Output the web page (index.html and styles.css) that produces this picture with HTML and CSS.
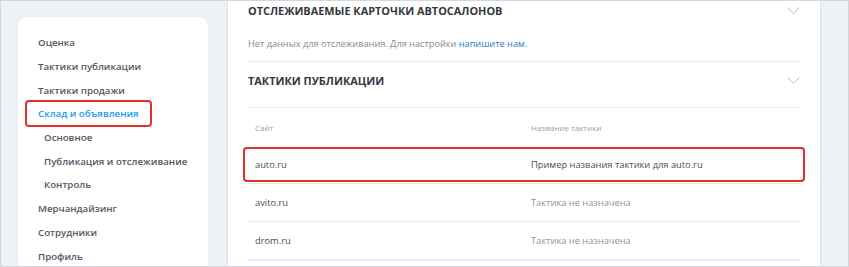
FILE: index.html
```html
<!DOCTYPE html>
<html lang="ru">

<head>
    <meta charset="UTF-8">
    <title>Настройки</title>
    <link rel="stylesheet" href="styles.css">
</head>

<body>
    <div class="frame">
        <aside class="sidebar">
            <div class="nav-item">Оценка</div>
            <div class="nav-item">Тактики публикации</div>
            <div class="nav-item">Тактики продажи</div>
            <div class="nav-item active"><span class="marked">Склад и объявления</span></div>
            <div class="nav-item sub">Основное</div>
            <div class="nav-item sub">Публикация и отслеживание</div>
            <div class="nav-item sub">Контроль</div>
            <div class="nav-item">Мерчандайзинг</div>
            <div class="nav-item">Сотрудники</div>
            <div class="nav-item">Профиль</div>
        </aside>

        <main class="panel">
            <div class="section-head first">
                <span>Отслеживаемые карточки автосалонов</span>
                <svg class="chevron" width="13" height="8" viewBox="0 0 13 8">
                    <polyline points="0.5,0.5 6.5,6.5 12.5,0.5" />
                </svg>
            </div>
            <p class="empty">Нет данных для отслеживания. Для настройки <a href="#">напишите нам.</a></p>

            <div class="section-head">
                <span>Тактики публикации</span>
                <svg class="chevron" width="13" height="8" viewBox="0 0 13 8">
                    <polyline points="0.5,0.5 6.5,6.5 12.5,0.5" />
                </svg>
            </div>

            <div class="tactics">
                <div class="row head">
                    <div>Сайт</div>
                    <div>Название тактики</div>
                </div>
                <div class="row marked-row">
                    <div>auto.ru</div>
                    <div>Пример названия тактики для auto.ru</div>
                </div>
                <div class="row">
                    <div>avito.ru</div>
                    <div class="none">Тактика не назначена</div>
                </div>
                <div class="row last">
                    <div>drom.ru</div>
                    <div class="none">Тактика не назначена</div>
                </div>
            </div>
        </main>
    </div>
</body>

</html>
```

FILE: styles.css
```css
body {
    margin: 0;
    font-family: 'Open Sans', sans-serif;
    background: #eef1f5;
}

.frame {
    height: 267px;
    box-sizing: border-box;
    border: 1px solid #d3d6da;
    overflow: hidden;
    display: flex;
    padding-left: 17px;
    gap: 20px;
}

/* left menu */
.sidebar {
    width: 190px;
    margin-top: 16px;
    padding-top: 14px;
    background: white;
    border-radius: 8px 8px 0 0;
    box-shadow: 0 0 1px rgba(0, 0, 0, 0.12);
}

.nav-item {
    height: 23.7px;
    display: flex;
    align-items: center;
    padding-left: 20px;
    font-size: 9.7px;
    font-weight: 600;
    color: #53585e;
}

.nav-item.sub {
    padding-left: 26px;
}

.nav-item.active {
    color: #1b9bef;
}

.marked {
    padding: 5px 11px;
    margin-left: -13px;
    border: 2px solid #e2312a;
    border-radius: 4px;
}

/* main panel */
.panel {
    width: 552px;
    padding: 0 20px;
    margin-top: -1px;
    background: white;
    box-shadow: 0 0 2px rgba(0, 0, 0, 0.18);
}

.section-head {
    display: flex;
    align-items: center;
    justify-content: space-between;
    padding: 11px 0 18px;
    line-height: 16px;
    font-size: 10.9px;
    font-weight: 700;
    text-transform: uppercase;
    color: #33373c;
    border-bottom: 1px solid #e8ebef;
}

.section-head.first {
    padding: 3px 0 2px;
    border-bottom: none;
}

.chevron {
    fill: none;
    stroke: #b7c0ca;
    stroke-width: 1;
}

.empty {
    margin: 0;
    padding: 15px 0 9px;
    line-height: 16px;
    font-size: 9.2px;
    color: #858a90;
    border-bottom: 1px solid #e8ebef;
}

.empty a {
    color: #2a7cc0;
    text-decoration: none;
}

.row {
    display: grid;
    grid-template-columns: 283px 1fr;
    align-items: center;
    height: 37px;
    border-bottom: 1px solid #e8ebef;
    font-size: 9.3px;
    color: #4a4e53;
}

.row > div:first-child {
    padding-left: 7px;
}

.row.head {
    font-size: 8px;
    color: #9aa0a6;
    border-bottom: none;
    height: 38px;
}

.row.last {
    border-bottom: 2px solid #e8ebef;
}

.row .none {
    color: #8f949a;
}

.marked-row {
    position: relative;
}

.marked-row::after {
    content: "";
    position: absolute;
    top: 1px;
    bottom: 1px;
    left: -5px;
    right: -5px;
    border: 2px solid #e2312a;
    border-radius: 4px;
}
```
